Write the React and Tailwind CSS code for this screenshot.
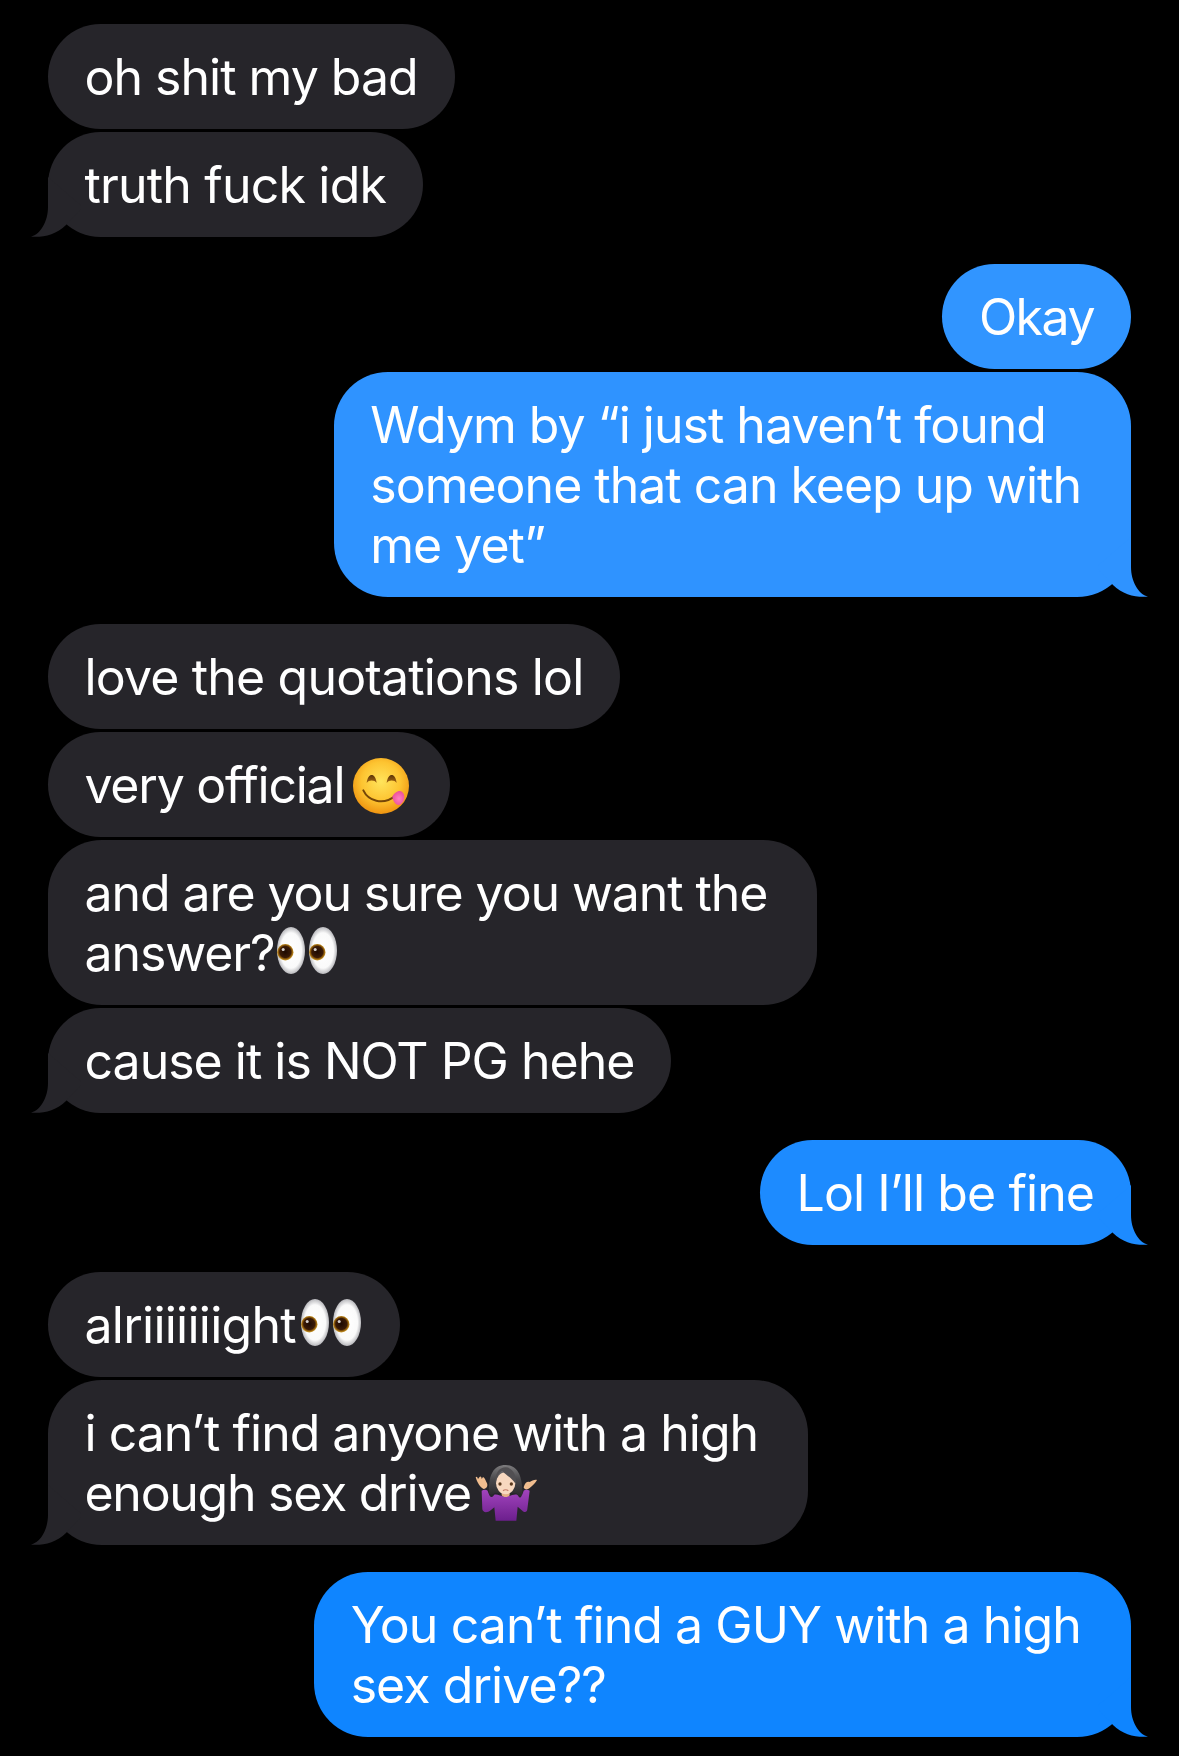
import React from "react";

// Small speech-bubble tail; interior overlaps the bubble's rounded corner.
function Tail({ side, fill }) {
  const pos = side === "left" ? "left-[-17px]" : "right-[-17px] -scale-x-100";
  return (
    <svg viewBox="0 0 50 60" className={`absolute bottom-0 w-[50px] h-[60px] ${pos}`}>
      <path
        d="M17 0 V30 C17 44 10 57 0 59.7 C12 60.6 25 58 35 48 L52 30 L40 20 Z"
        fill={fill}
      />
    </svg>
  );
}

function Bubble({ side, tail, multi, color, track = "tracking-[-1px]", pad, children }) {
  const isLeft = side === "left";
  const right = pad || (multi ? "pr-[50px]" : "pr-[37px]");
  return (
    <div
      className={`relative w-fit whitespace-nowrap text-white text-[50px] leading-[60px] font-['Inter','Noto_Sans',sans-serif] py-[22.5px] pl-[36.5px] ${track} ${right} ${
        multi ? "rounded-[54px]" : "rounded-[52.5px]"
      } ${isLeft ? "self-start" : "self-end"}`}
      style={{ backgroundColor: color }}
    >
      {tail && <Tail side={side} fill={color} />}
      <span className="relative">{children}</span>
    </div>
  );
}

function Savoring() {
  return (
    <svg viewBox="39 81 168 168" className="inline-block w-[56px] h-[56px] -my-8 ml-[9px] align-[21px]">
      <defs>
        <radialGradient id="faceFill" cx="50%" cy="42%" r="58%">
          <stop offset="0%" stopColor="#ffe45c" />
          <stop offset="60%" stopColor="#fdc431" />
          <stop offset="100%" stopColor="#ef9410" />
        </radialGradient>
        <linearGradient id="smileEye" x1="0" y1="0" x2="0" y2="1">
          <stop offset="0%" stopColor="#5c3508" />
          <stop offset="100%" stopColor="#a86a12" />
        </linearGradient>
        <radialGradient id="tongue" cx="55%" cy="55%" r="55%">
          <stop offset="0%" stopColor="#ff7fc0" />
          <stop offset="100%" stopColor="#ec4f9a" />
        </radialGradient>
      </defs>
      <circle cx="123" cy="165" r="84" fill="url(#faceFill)" />
      <path d="M80 156 C84 124 106 124 110 156 C104 146 86 146 80 156 Z" fill="url(#smileEye)" />
      <path d="M140 156 C144 124 166 124 170 156 C164 146 146 146 140 156 Z" fill="url(#smileEye)" />
      <path d="M70 178 C84 208 128 226 166 194" fill="none" stroke="#754608" strokeWidth="6" strokeLinecap="round" />
      <path d="M157 197 C162 186 176 176 186 182 C196 190 196 208 182 220 C172 226 160 216 157 197 Z" fill="url(#tongue)" />
    </svg>
  );
}

function Eye({ x, id }) {
  return (
    <g transform={`translate(${x} 0)`}>
      <ellipse cx="14" cy="23.5" rx="14" ry="23.5" fill={`url(#${id})`} />
      <circle cx="8.3" cy="25.3" r="8.2" fill={`url(#${id}Iris)`} />
      <circle cx="6.2" cy="22.5" r="1.5" fill="#fff" opacity="0.8" />
    </g>
  );
}

function Eyes({ id, className }) {
  return (
    <svg viewBox="0 0 60 47" className={`inline-block h-[47px] -my-8 align-[29px] ${className}`}>
      <defs>
        <radialGradient id={id} cx="50%" cy="50%" r="50%">
          <stop offset="0%" stopColor="#ffffff" />
          <stop offset="75%" stopColor="#fafafa" />
          <stop offset="100%" stopColor="#b8b8bc" />
        </radialGradient>
        <radialGradient id={`${id}Iris`} cx="50%" cy="48%" r="50%">
          <stop offset="0%" stopColor="#1e0a02" />
          <stop offset="68%" stopColor="#3a1a06" />
          <stop offset="86%" stopColor="#97620c" />
          <stop offset="100%" stopColor="#c8982e" />
        </radialGradient>
      </defs>
      <Eye x={0} id={id} />
      <Eye x={32} id={id} />
    </svg>
  );
}

function Shrug() {
  return (
    <svg viewBox="48 45 192 171" className="inline-block w-[64px] h-[57px] -my-8 ml-[4px] align-[21px]">
      <defs>
        <linearGradient id="hairFill" x1="0" y1="0" x2="0" y2="1">
          <stop offset="0%" stopColor="#7d7c7e" />
          <stop offset="45%" stopColor="#4a494c" />
          <stop offset="100%" stopColor="#29282b" />
        </linearGradient>
        <linearGradient id="topFill" x1="0" y1="0" x2="0" y2="1">
          <stop offset="0%" stopColor="#a244bd" />
          <stop offset="100%" stopColor="#6c1f8d" />
        </linearGradient>
      </defs>
      <path d="M50 82 C52 78 55 80 57 87 L61 82 C64 77 68 80 68 87 L72 81 C77 82 79 90 84 100 C87 108 83 116 74 117 C64 114 54 96 50 82 Z" fill="#f0bd8f" />
      <path d="M234 90 C226 88 218 94 212 96 C204 94 198 98 194 112 C196 120 206 120 212 114 C222 106 230 98 234 90 Z" fill="#f0bd8f" />
      <path d="M90 130 C88 80 100 45 140 45 C180 45 192 85 190 138 C186 142 178 138 172 130 L108 128 C102 134 95 136 90 130 Z" fill="url(#hairFill)" />
      <path d="M68 122 C74 118 82 118 86 122 C90 135 96 150 105 135 C112 130 125 140 140 140 C160 136 172 128 178 138 C184 150 190 135 194 122 C198 118 206 118 212 122 L205 178 C204 186 198 190 190 182 L176 170 L172 212 L110 212 L106 172 L96 180 C84 190 72 188 70 178 Z" fill="url(#topFill)" />
      <path d="M128 118 H152 V136 C148 143 132 143 128 136 Z" fill="#e5ae86" />
      <ellipse cx="140" cy="100" rx="29" ry="33" fill="#f8d8bf" />
      <path d="M110 102 C112 78 120 68 130 62 C140 76 158 82 170 102 C174 72 158 52 140 52 C120 52 106 72 110 102 Z" fill="#514f52" />
      <circle cx="123" cy="102" r="5" fill="#5b3a1e" />
      <circle cx="157" cy="102" r="5" fill="#5b3a1e" />
      <path d="M132 122 C136 119 144 119 148 122" fill="none" stroke="#c77f6c" strokeWidth="3.5" />
    </svg>
  );
}

export default function App() {
  const gray = "#26252a";
  return (
    <div className="w-[1179px] min-h-[1756px] bg-black pt-6 pb-[19px] px-12 flex flex-col gap-[27px]">
      <section className="flex flex-col gap-[3px]">
        <Bubble side="left" color={gray}>oh shit my bad</Bubble>
        <Bubble side="left" color={gray} tail track="tracking-[-0.82px]">truth fuck idk</Bubble>
      </section>

      <section className="flex flex-col gap-[3px]">
        <Bubble side="right" color="#3195ff" track="tracking-[-1.5px]">Okay</Bubble>
        <Bubble side="right" color="#2f93ff" tail multi>
          Wdym by “i just haven’t found<br />someone that can keep up with<br />me yet”
        </Bubble>
      </section>

      <section className="flex flex-col gap-[3px]">
        <Bubble side="left" color={gray} track="tracking-[-0.83px]">love the quotations lol</Bubble>
        <Bubble side="left" color={gray} track="tracking-[-1.25px]" pad="pr-[41px]">very official<Savoring /></Bubble>
        <Bubble side="left" color={gray} multi track="tracking-[-1.08px]">
          and are you sure you want the<br />answer?<Eyes id="eyesA" className="w-[60px] ml-[2px]" />
        </Bubble>
        <Bubble side="left" color={gray} tail>cause it is NOT PG hehe</Bubble>
      </section>

      <section className="flex flex-col gap-[3px]">
        <Bubble side="right" color="#1d8bff" tail track="tracking-[-0.93px]">Lol I’ll be fine</Bubble>
      </section>

      <section className="flex flex-col gap-[3px]">
        <Bubble side="left" color={gray} track="tracking-[-0.75px]" pad="pr-[39px]">
          alriiiiiiight<Eyes id="eyesB" className="w-[60px] ml-[5px]" />
        </Bubble>
        <Bubble side="left" color={gray} tail multi>
          i can’t find anyone with a high<br />
          <span className="tracking-[-1.28px]">enough sex drive</span><Shrug />
        </Bubble>
      </section>

      <section className="flex flex-col gap-[3px]">
        <Bubble side="right" color="#0f85ff" tail multi track="tracking-[-0.93px]">
          You can’t find a GUY with a high<br />sex drive??
        </Bubble>
      </section>
    </div>
  );
}
